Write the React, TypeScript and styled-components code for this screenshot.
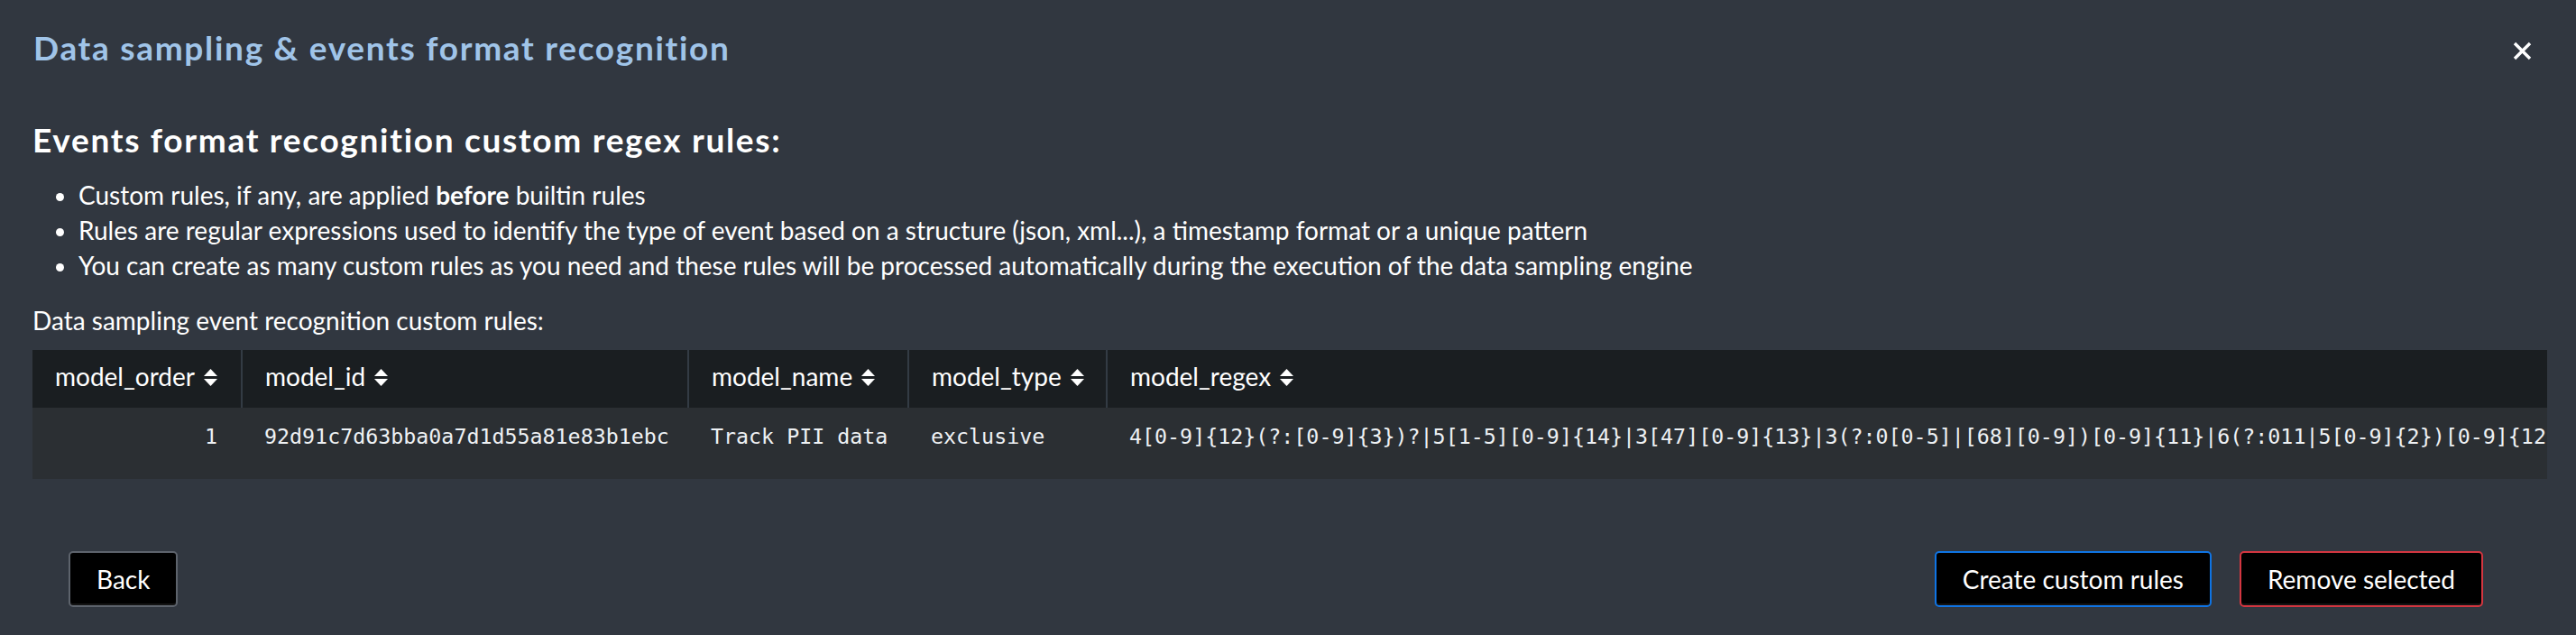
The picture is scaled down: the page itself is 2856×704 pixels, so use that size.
import React from "react";
import styled, { createGlobalStyle } from "styled-components";

const GlobalStyle = createGlobalStyle`
  html, body {
    margin: 0;
    padding: 0;
    background: #313740;
  }
  body {
    font-family: Lato, "Open Sans", sans-serif;
    color: #ffffff;
  }
  * { box-sizing: border-box; }
`;

const Modal = styled.div`
  width: 2856px;
  height: 704px;
  background: #313740;
  display: flex;
  flex-direction: column;
  overflow: hidden;
`;

const Header = styled.header`
  height: 106px;
  display: flex;
  align-items: center;
  justify-content: space-between;
  padding: 0 49px 0 37px;
`;

const Title = styled.h1`
  margin: 0;
  font-size: 37px;
  line-height: 44px;
  font-weight: 700;
  letter-spacing: 1.7px;
  color: #a0c4e8;
`;

const CloseButton = styled.button`
  background: none;
  border: none;
  padding: 0;
  width: 21px;
  height: 21px;
  margin-top: 6px;
  display: flex;
  cursor: pointer;
`;

const Body = styled.main`
  padding: 0 32px 0 36px;
  display: flex;
  flex-direction: column;
`;

const Heading = styled.h2`
  margin: 27px 0 0;
  font-size: 37px;
  line-height: 44px;
  font-weight: 700;
  letter-spacing: 1.7px;
  color: #ffffff;
`;

const List = styled.ul`
  margin: 20px 0 0;
  padding: 0 0 0 51px;
  font-size: 28px;
  line-height: 39px;
  color: #ffffff;
`;

const Item = styled.li``;

const Label = styled.p`
  margin: 22px 0 0;
  font-size: 28px;
  line-height: 39px;
`;

const TableWrap = styled.div`
  margin-top: 13px;
  overflow: hidden;
  width: 100%;
`;

const Table = styled.table`
  border-collapse: collapse;
  table-layout: fixed;
  width: 3500px;
  white-space: nowrap;
`;

const Th = styled.th<{ $first?: boolean }>`
  background: #1a1e21;
  height: 64px;
  padding: 13px 26px 19px 25px;
  text-align: left;
  vertical-align: top;
  font-size: 28px;
  line-height: 32px;
  font-weight: 400;
  color: #ffffff;
  border-left: ${(p) => (p.$first ? "none" : "2px solid #333b44")};
`;

const Td = styled.td<{ $right?: boolean }>`
  background: #2b2f33;
  height: 79px;
  padding: 16px 27px 31px 25px;
  vertical-align: top;
  overflow: hidden;
  text-align: ${(p) => (p.$right ? "right" : "left")};
  font-family: "DejaVu Sans Mono", "Liberation Mono", monospace;
  font-size: 23.3px;
  line-height: 32px;
  color: #eef1f4;
`;

const SortIcon = styled.svg`
  width: 15px;
  height: 19px;
  margin-left: 10px;
  vertical-align: baseline;
`;

const Footer = styled.footer`
  margin-top: auto;
  height: 93px;
  padding: 0 103px 31px 76px;
  display: flex;
  align-items: flex-start;
  justify-content: space-between;
`;

const ButtonGroup = styled.div`
  display: flex;
  gap: 31px;
`;

const Button = styled.button<{ $tone: "neutral" | "primary" | "danger" }>`
  height: 62px;
  padding: 0 29px;
  background: #000000;
  color: #ffffff;
  font-family: Lato, "Open Sans", sans-serif;
  font-size: 28px;
  border-radius: 5px;
  border: 2px solid
    ${(p) =>
      p.$tone === "primary" ? "#0f74e4" : p.$tone === "danger" ? "#d33640" : "#5d636c"};
  box-shadow: inset 0 -2px 0 rgba(255, 255, 255, 0.08);
  cursor: pointer;
`;

const Sort = () => (
  <SortIcon viewBox="0 0 15 19" aria-hidden="true">
    <polygon points="0,8 7.5,0 15,8" fill="#ffffff" />
    <polygon points="0,11 15,11 7.5,19" fill="#ffffff" />
  </SortIcon>
);

const columns = ["model_order", "model_id", "model_name", "model_type", "model_regex"];
const widths = [232, 495, 244, 220, 2309];

const regex =
  "4[0-9]{12}(?:[0-9]{3})?|5[1-5][0-9]{14}|3[47][0-9]{13}|3(?:0[0-5]|[68][0-9])[0-9]{11}|6(?:011|5[0-9]{2})[0-9]{12}|(?:2131|1800|35\\d{3})\\d{11}";

export default function App() {
  return (
    <>
      <GlobalStyle />
      <Modal>
        <Header>
          <Title>Data sampling &amp; events format recognition</Title>
          <CloseButton aria-label="Close">
            <svg width="21" height="21" viewBox="0 0 21 21">
              <path d="M2 2 L19 19 M19 2 L2 19" stroke="#ffffff" strokeWidth="3.4" />
            </svg>
          </CloseButton>
        </Header>
        <Body>
          <Heading>Events format recognition custom regex rules:</Heading>
          <List>
            <Item>
              Custom rules, if any, are applied <b>before</b> builtin rules
            </Item>
            <Item>
              Rules are regular expressions used to identify the type of event based on a structure
              (json, xml...), a timestamp format or a unique pattern
            </Item>
            <Item>
              You can create as many custom rules as you need and these rules will be processed
              automatically during the execution of the data sampling engine
            </Item>
          </List>
          <Label>Data sampling event recognition custom rules:</Label>
          <TableWrap>
            <Table>
              <colgroup>
                {widths.map((w, i) => (
                  <col key={i} style={{ width: w }} />
                ))}
              </colgroup>
              <thead>
                <tr>
                  {columns.map((c, i) => (
                    <Th key={c} $first={i === 0}>
                      {c}
                      <Sort />
                    </Th>
                  ))}
                </tr>
              </thead>
              <tbody>
                <tr>
                  <Td $right>1</Td>
                  <Td>92d91c7d63bba0a7d1d55a81e83b1ebc</Td>
                  <Td>Track PII data</Td>
                  <Td>exclusive</Td>
                  <Td>{regex}</Td>
                </tr>
              </tbody>
            </Table>
          </TableWrap>
        </Body>
        <Footer>
          <Button $tone="neutral">Back</Button>
          <ButtonGroup>
            <Button $tone="primary">Create custom rules</Button>
            <Button $tone="danger">Remove selected</Button>
          </ButtonGroup>
        </Footer>
      </Modal>
    </>
  );
}
